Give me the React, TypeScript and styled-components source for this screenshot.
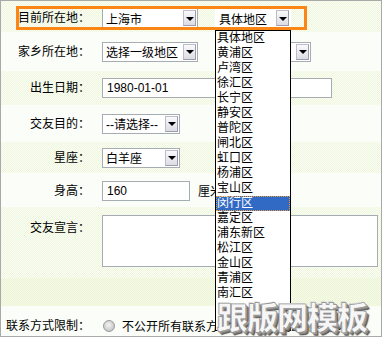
import React from "react";
import styled, { createGlobalStyle } from "styled-components";

const Global = createGlobalStyle`
  html, body { margin: 0; padding: 0; background: #ffffff; }
  body { font-family: "Liberation Sans", "Noto Sans CJK SC", sans-serif; font-size: 12px; color: #000; }
`;

const FONT = `"Liberation Sans", "Noto Sans CJK SC", sans-serif`;

const Frame = styled.div`
  position: relative;
  width: 382px;
  height: 337px;
  box-sizing: border-box;
  border: 1px solid #a9a9a9;
  display: flex;
  flex-direction: column;
  overflow: hidden;
`;

type Bg = "dot" | "plain" | "green";

const bgFor = (b: Bg) => {
  if (b === "dot")
    return "repeating-conic-gradient(#edf5da 0 25%, #fcfef8 0 50%) 0 0 / 2px 2px";
  if (b === "green")
    return "repeating-conic-gradient(#eaf3d2 0 25%, #f7fbec 0 50%) 0 0 / 2px 2px";
  return "#fbfdf8";
};

const Row = styled.div<{ $h: number; $bg: Bg; $pt?: number; $top?: boolean }>`
  display: grid;
  grid-template-columns: 89px 1fr;
  column-gap: 12px;
  height: ${(p) => p.$h}px;
  box-sizing: border-box;
  padding-top: ${(p) => p.$pt ?? 0}px;
  align-items: ${(p) => (p.$top ? "start" : "center")};
  background: ${(p) => bgFor(p.$bg)};
`;

const Label = styled.div<{ $pt?: number }>`
  text-align: right;
  white-space: nowrap;
  font-family: ${FONT};
  font-size: 12px;
  line-height: 14px;
  padding-top: ${(p) => p.$pt ?? 0}px;
`;

const Field = styled.div<{ $gap?: number }>`
  display: flex;
  align-items: center;
  gap: ${(p) => p.$gap ?? 17}px;
  white-space: nowrap;
`;

const Select = styled.div<{ $w: number; $bare?: boolean }>`
  width: ${(p) => p.$w}px;
  height: 20px;
  box-sizing: border-box;
  border: 1px solid ${(p) => (p.$bare ? "#ffffff" : "#a5acb2")};
  background: #fff;
  display: flex;
  align-items: center;
  justify-content: space-between;
  padding: 0 1px 0 3px;
  font-family: ${FONT};
  font-size: 12px;
  overflow: hidden;
`;

const ArrowBtn = styled.div`
  width: 13px;
  height: 16px;
  box-sizing: border-box;
  border: 1px solid #bcbccb;
  border-right-color: #9c9cae;
  border-bottom-color: #9c9cae;
  background: linear-gradient(#fafafc, #dcdce4);
  display: flex;
  align-items: center;
  justify-content: center;
  flex: none;
  &::after {
    content: "";
    width: 0;
    height: 0;
    border-left: 4px solid transparent;
    border-right: 4px solid transparent;
    border-top: 4px solid #000;
    margin-top: 1px;
  }
`;

const TextInput = styled.input<{ $w: number }>`
  width: ${(p) => p.$w}px;
  height: 20px;
  box-sizing: border-box;
  border: 1px solid #a5acb2;
  background: #fff;
  padding: 0 4px;
  margin: 0;
  font-family: ${FONT};
  font-size: 12px;
  color: #000;
  outline: none;
`;

const TextArea = styled.textarea`
  width: 276px;
  height: 52px;
  box-sizing: border-box;
  border: 1px solid #a5acb2;
  background: #fff;
  margin: 0;
  resize: none;
  outline: none;
  display: block;
`;

const Unit = styled.span`
  font-family: ${FONT};
  font-size: 12px;
`;

const Radio = styled.span`
  width: 12px;
  height: 12px;
  box-sizing: border-box;
  border-radius: 50%;
  border: 1px solid #9a9a9a;
  background: radial-gradient(circle at 45% 40%, #f4f4f4 0, #d2d2d2 55%, #b8b8b8 100%);
  margin-left: 1px;
  flex: none;
`;

const Highlight = styled.div`
  position: absolute;
  left: 15px;
  top: 5px;
  width: 291px;
  height: 24px;
  box-sizing: border-box;
  border: 3px solid #fb8515;
  pointer-events: none;
`;

const ListBox = styled.div`
  position: absolute;
  left: 214px;
  top: 29px;
  width: 76px;
  height: 301px;
  box-sizing: border-box;
  border: 1px solid #000;
  background: #fff;
  display: flex;
  flex-direction: column;
  overflow: hidden;
`;

const ListItem = styled.div<{ $sel?: boolean }>`
  height: 15px;
  flex: none;
  box-sizing: border-box;
  line-height: 14px;
  padding-left: 1px;
  font-family: ${FONT};
  font-size: 12px;
  white-space: nowrap;
  color: ${(p) => (p.$sel ? "#fff" : "#000")};
  background: ${(p) => (p.$sel ? "#316ac5" : "transparent")};
  outline: ${(p) => (p.$sel ? "1px dotted #e9a23b" : "none")};
  outline-offset: -1px;
`;

const Watermark = styled.div`
  position: absolute;
  left: 216px;
  top: 297px;
  font-family: "Noto Sans CJK SC", sans-serif;
  font-weight: 900;
  font-size: 31px;
  line-height: 36px;
  letter-spacing: -1px;
  color: #f6f6f6;
  -webkit-text-stroke: 0.6px #8c8c8c;
  text-shadow: 1px 1px 0 #a0a0a0, 2px 2px 0 #808080, 3px 3px 1px #505050, -1px -1px 0 #d8d8d8;
  white-space: nowrap;
  pointer-events: none;
`;

const districts = [
  "具体地区", "黄浦区", "卢湾区", "徐汇区", "长宁区", "静安区", "普陀区",
  "闸北区", "虹口区", "杨浦区", "宝山区", "闵行区", "嘉定区", "浦东新区",
  "松江区", "金山区", "青浦区", "南汇区",
];

const FakeSelect: React.FC<{ w: number; text: string; bare?: boolean }> = ({ w, text, bare }) => (
  <Select $w={w} $bare={bare}>
    <span>{text}</span>
    <ArrowBtn />
  </Select>
);

export default function App() {
  return (
    <>
      <Global />
      <Frame>
        <Row $h={31} $bg="dot" $pt={3}>
          <Label>目前所在地：</Label>
          <Field>
            <FakeSelect w={96} text="上海市" />
            <FakeSelect w={76} text="具体地区" bare />
          </Field>
        </Row>
        <Row $h={39} $bg="plain">
          <Label>家乡所在地：</Label>
          <Field>
            <FakeSelect w={96} text="选择一级地区" />
            <FakeSelect w={96} text="" />
          </Field>
        </Row>
        <Row $h={34} $bg="dot">
          <Label>出生日期：</Label>
          <Field>
            <TextInput $w={230} defaultValue="1980-01-01" readOnly />
          </Field>
        </Row>
        <Row $h={37} $bg="plain">
          <Label>交友目的：</Label>
          <Field>
            <FakeSelect w={78} text="--请选择--" />
          </Field>
        </Row>
        <Row $h={31} $bg="dot">
          <Label>星座：</Label>
          <Field>
            <FakeSelect w={78} text="白羊座" />
          </Field>
        </Row>
        <Row $h={34} $bg="plain" $pt={1}>
          <Label>身高：</Label>
          <Field $gap={8}>
            <TextInput $w={88} defaultValue="160" readOnly />
            <Unit>厘米</Unit>
          </Field>
        </Row>
        <Row $h={71} $bg="dot" $pt={8} $top>
          <Label $pt={6}>交友宣言：</Label>
          <Field>
            <TextArea readOnly />
          </Field>
        </Row>
        <Row $h={28} $bg="green" />
        <Row $h={30} $bg="plain" $pt={9}>
          <Label>联系方式限制：</Label>
          <Field $gap={7}>
            <Radio />
            <Unit>不公开所有联系方式　仅对好友公开通信地址</Unit>
          </Field>
        </Row>

        <ListBox>
          {districts.map((d, i) => (
            <ListItem key={d} $sel={i === 11}>
              {d}
            </ListItem>
          ))}
        </ListBox>
        <Highlight />
        <Watermark>跟版网模板</Watermark>
      </Frame>
    </>
  );
}
